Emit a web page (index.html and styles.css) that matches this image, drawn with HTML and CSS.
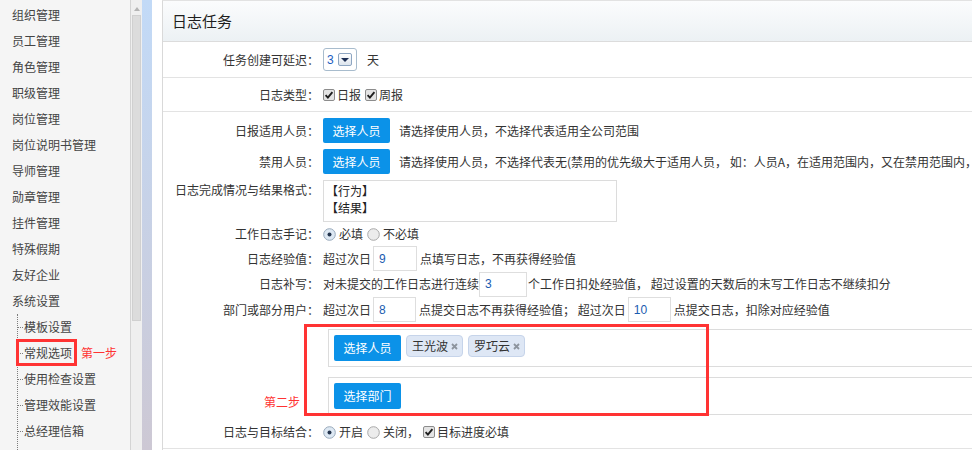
FILE: index.html
```html
<!DOCTYPE html>
<html lang="zh-CN">
<head>
<meta charset="utf-8">
<title>日志任务</title>
<link rel="stylesheet" href="styles.css">
</head>
<body>
<div class="page">
  <aside class="sidebar">
    <ul class="menu">
      <li>组织管理</li>
      <li>员工管理</li>
      <li>角色管理</li>
      <li>职级管理</li>
      <li>岗位管理</li>
      <li>岗位说明书管理</li>
      <li>导师管理</li>
      <li>勋章管理</li>
      <li>挂件管理</li>
      <li>特殊假期</li>
      <li>友好企业</li>
      <li>系统设置</li>
    </ul>
    <ul class="sub">
      <li><span class="stub"></span>模板设置</li>
      <li class="active"><span class="mark"></span><span class="stub"></span>常规选项<span class="step">第一步</span></li>
      <li><span class="stub"></span>使用检查设置</li>
      <li><span class="stub"></span>管理效能设置</li>
      <li><span class="stub"></span>总经理信箱</li>
      <li><span class="stub"></span></li>
    </ul>
  </aside>
  <div class="scroll"><div class="arrow"></div><div class="thumb"></div></div>
  <div class="strip"></div>
  <div class="gutter"></div>
  <main class="main">
    <div class="head">日志任务</div>
    <div class="row r1">
      <div class="lbl">任务创建可延迟：</div>
      <div class="val"><span class="sel"><span class="selv">3</span><span class="dd"><span class="tri"></span></span></span><span class="unit">天</span></div>
    </div>
    <div class="row r2">
      <div class="lbl">日志类型：</div>
      <div class="val">
        <svg class="cb" viewBox="0 0 12 12"><rect x=".5" y=".5" width="11" height="11" rx="1.5" fill="#e4e4e4" stroke="#8c8c8c"/><path d="M2.6 6.1 4.9 8.6 9.4 3.2" fill="none" stroke="#1e1e1e" stroke-width="1.9"/></svg><span class="opt">日报</span>
        <svg class="cb" viewBox="0 0 12 12"><rect x=".5" y=".5" width="11" height="11" rx="1.5" fill="#e4e4e4" stroke="#8c8c8c"/><path d="M2.6 6.1 4.9 8.6 9.4 3.2" fill="none" stroke="#1e1e1e" stroke-width="1.9"/></svg><span class="opt">周报</span>
      </div>
    </div>
    <div class="section">
      <div class="line la">
        <div class="lbl">日报适用人员：</div>
        <div class="val"><button class="btn">选择人员</button><span class="hint">请选择使用人员，不选择代表适用全公司范围</span></div>
      </div>
      <div class="line la">
        <div class="lbl">禁用人员：</div>
        <div class="val"><button class="btn">选择人员</button><span class="hint">请选择使用人员，不选择代表无(禁用的优先级大于适用人员， 如：人员A，在适用范围内，又在禁用范围内，</span></div>
      </div>
      <div class="line lc">
        <div class="lbl">日志完成情况与结果格式：</div>
        <div class="val"><div class="ta">【行为】<br>【结果】</div></div>
      </div>
      <div class="line ld">
        <div class="lbl">工作日志手记：</div>
        <div class="val">
          <svg class="rd" viewBox="0 0 13 13"><circle cx="6.5" cy="6.5" r="5.8" fill="#dde8f3" stroke="#98a9bb"/><circle cx="6.5" cy="6.5" r="2" fill="#23344d"/></svg><span class="opt">必填</span>
          <svg class="rd" viewBox="0 0 13 13"><circle cx="6.5" cy="6.5" r="5.8" fill="#ececec" stroke="#a8a8a8"/></svg><span class="opt">不必填</span>
        </div>
      </div>
      <div class="line le">
        <div class="lbl">日志经验值：</div>
        <div class="val">超过次日<input class="num w44" value="9">点填写日志，不再获得经验值</div>
      </div>
      <div class="line lf">
        <div class="lbl">日志补写：</div>
        <div class="val">对未提交的工作日志进行连续<input class="num w48" value="3">个工作日扣处经验值， 超过设置的天数后的末写工作日志不继续扣分</div>
      </div>
      <div class="line lg">
        <div class="lbl">部门或部分用户：</div>
        <div class="val">超过次日<input class="num w43" value="8">点提交日志不再获得经验值； 超过次日<input class="num w43" value="10">点提交日志，扣除对应经验值</div>
      </div>
      <div class="boxes">
        <div class="pick">
          <button class="btn tall">选择人员</button>
          <span class="tag">王光波<svg class="x" viewBox="0 0 7 7"><path d="M1 1 6 6M6 1 1 6" stroke="#8d949e" stroke-width="1.8"/></svg></span>
          <span class="tag">罗巧云<svg class="x" viewBox="0 0 7 7"><path d="M1 1 6 6M6 1 1 6" stroke="#8d949e" stroke-width="1.8"/></svg></span>
        </div>
        <div class="pick second">
          <button class="btn tall">选择部门</button>
        </div>
      </div>
      <div class="line lh">
        <div class="lbl">日志与目标结合：</div>
        <div class="val">
          <svg class="rd" viewBox="0 0 13 13"><circle cx="6.5" cy="6.5" r="5.8" fill="#dde8f3" stroke="#98a9bb"/><circle cx="6.5" cy="6.5" r="2" fill="#23344d"/></svg><span class="opt">开启</span>
          <svg class="rd" viewBox="0 0 13 13"><circle cx="6.5" cy="6.5" r="5.8" fill="#ececec" stroke="#a8a8a8"/></svg><span class="opt">关闭，</span>
          <svg class="cb" viewBox="0 0 12 12"><rect x=".5" y=".5" width="11" height="11" rx="1.5" fill="#e4e4e4" stroke="#8c8c8c"/><path d="M2.6 6.1 4.9 8.6 9.4 3.2" fill="none" stroke="#1e1e1e" stroke-width="1.9"/></svg><span class="opt">目标进度必填</span>
        </div>
      </div>
      <div class="redbox"></div>
      <div class="step2">第二步</div>
    </div>
  </main>
</div>
</body>
</html>
```
FILE: styles.css
```css
html, body {
  margin: 0;
  padding: 0;
}
body {
  font: 12px/1.5 "Noto Sans CJK SC", "Liberation Sans", sans-serif;
  color: #333;
  background: #fff;
}
.page {
  display: flex;
  width: 972px;
  height: 450px;
  overflow: hidden;
}

/* sidebar */
.sidebar {
  width: 130px;
  flex: none;
  background: #f5f5f5;
  padding-top: 2px;
  box-sizing: border-box;
  overflow: hidden;
  color: #444;
}
.menu, .sub {
  list-style: none;
  margin: 0;
  padding: 0;
}
.menu li {
  height: 26px;
  line-height: 26px;
  padding-left: 12px;
}
.sub {
  margin-left: 17px;
  border-left: 1px dotted #7d7d7d;
}
.sub li {
  height: 26px;
  display: flex;
  align-items: center;
  position: relative;
  white-space: nowrap;
}
.stub {
  width: 5px;
  border-top: 1px dotted #7d7d7d;
  margin-right: 1px;
}
.mark {
  position: absolute;
  left: -2px;
  top: -1px;
  width: 61px;
  height: 27px;
  border: 3px solid #f33;
  box-sizing: border-box;
}
.step {
  color: #f33;
  margin-left: 9px;
}

/* scrollbar */
.scroll {
  width: 12px;
  flex: none;
  background: #efefef;
  border-left: 1px solid #d4d4d4;
  box-sizing: border-box;
  display: flex;
  flex-direction: column;
  align-items: center;
}
.arrow {
  width: 0;
  height: 0;
  margin-top: 7px;
  margin-bottom: 4px;
  border-left: 3px solid transparent;
  border-right: 3px solid transparent;
  border-bottom: 4px solid #b4b4b4;
}
.thumb {
  width: 9px;
  height: 306px;
  background: #dcdcdc;
  border: 1px solid #d0d0d0;
  box-sizing: border-box;
}
.strip {
  width: 10px;
  flex: none;
  background: linear-gradient(#c2daf7, #cdc8d4);
}
.gutter {
  width: 10px;
  flex: none;
}

/* main */
.main {
  flex: 1;
  min-width: 0;
  border-left: 1px solid #d9d9d9;
  border-top: 1px solid #e2e2e2;
  overflow: hidden;
}
.head {
  height: 40px;
  line-height: 40px;
  border-bottom: 1px solid #dcdcdc;
  background: linear-gradient(#fbfcfd, #ecf1f4);
  font-size: 15px;
  padding-left: 9px;
  color: #1e1e1e;
}
.row, .line {
  display: flex;
  align-items: center;
  white-space: nowrap;
}
.row {
  border-bottom: 1px solid #e3e3e3;
}
.r1 { height: 35px; }
.r2 { height: 33px; }
.lbl {
  width: 156px;
  padding-right: 4px;
  flex: none;
  text-align: right;
}
.val {
  display: flex;
  align-items: center;
  white-space: nowrap;
}

.sel {
  display: inline-flex;
  align-items: center;
  width: 34px;
  height: 23px;
  box-sizing: border-box;
  border: 1px solid #a8bccd;
  border-radius: 3px;
  padding-left: 3px;
}
.selv {
  font-family: "Liberation Sans", sans-serif;
  color: #1d5fbf;
  width: 11px;
}
.dd {
  width: 14px;
  height: 13px;
  box-sizing: border-box;
  border: 1px solid #8ea6c2;
  border-radius: 2px;
  background: linear-gradient(#ffffff, #dde5ee);
  display: flex;
  align-items: center;
  justify-content: center;
}
.tri {
  width: 0;
  height: 0;
  border-left: 4px solid transparent;
  border-right: 4px solid transparent;
  border-top: 4px solid #1c2e54;
}
.unit {
  margin-left: 10px;
}

.cb {
  width: 12px;
  height: 12px;
  flex: none;
  margin-right: 2px;
}
.rd {
  width: 13px;
  height: 13px;
  flex: none;
  margin-right: 3px;
}
.opt {
  margin-right: 4px;
}

/* section */
.section {
  position: relative;
  padding: 6px 0 2px;
  border-bottom: 1px solid #e3e3e3;
}
.la { height: 25px; margin-bottom: 6px; }
.lc { height: 42px; align-items: flex-start; }
.lc .lbl { line-height: 20px; }
.ld { height: 24px; }
.le { height: 25px; }
.lf { height: 26px; }
.lg { height: 25px; }
.lh { height: 28px; margin-top: 3px; }

.btn {
  height: 25px;
  width: 67px;
  padding: 0;
  border: 0;
  border-radius: 2px;
  background: #0b92e8;
  color: #fff;
  font: 12px/25px "Noto Sans CJK SC", "Liberation Sans", sans-serif;
  flex: none;
}
.btn.tall {
  height: 26px;
  line-height: 26px;
}
.hint {
  margin-left: 9px;
}
.ta {
  width: 294px;
  height: 42px;
  box-sizing: border-box;
  border: 1px solid #dcdcdc;
  padding: 1px 2px;
  line-height: 17px;
  color: #222;
}
.num {
  box-sizing: border-box;
  height: 25px;
  border: 1px solid #dedede;
  padding: 0 5px;
  margin: 0 3px 0 2px;
  font: 12px "Liberation Sans", sans-serif;
  color: #1a5cb0;
  outline: none;
}
.w44 { width: 44px; }
.w48 { width: 48px; margin: 0 1px 0 0; }
.w43 { width: 43px; }

.boxes {
  margin-left: 165px;
}
.pick {
  height: 38px;
  box-sizing: border-box;
  border: 1px solid #dcdcdc;
  border-right: 0;
  margin-top: 7px;
  padding: 5px;
  display: flex;
  align-items: flex-start;
  gap: 5px;
}
.pick.second {
  margin-top: 10px;
}
.tag {
  height: 22px;
  box-sizing: border-box;
  border: 1px solid #c6d4ea;
  background: #dee7f5;
  border-radius: 4px;
  padding: 0 4px 0 5px;
  display: inline-flex;
  align-items: center;
  gap: 3px;
  color: #333;
}
.x {
  width: 7px;
  height: 7px;
}

.redbox {
  position: absolute;
  left: 141px;
  top: 212px;
  width: 405px;
  height: 92px;
  border: 3px solid #f33;
  box-sizing: border-box;
}
.step2 {
  position: absolute;
  left: 101px;
  top: 282px;
  line-height: 16px;
  color: #f33;
}
```
